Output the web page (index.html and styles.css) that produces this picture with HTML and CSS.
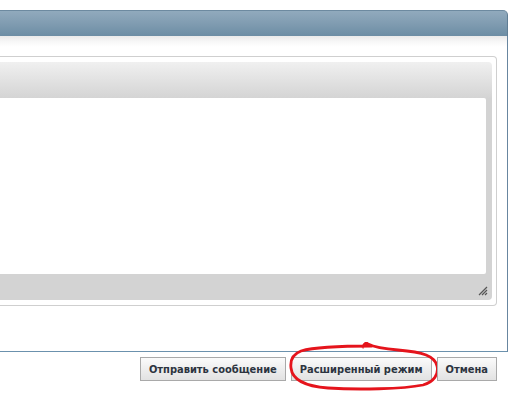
FILE: index.html
```html
<!DOCTYPE html>
<html lang="ru">
<head>
<meta charset="utf-8">
<title>Dialog</title>
<link rel="stylesheet" href="styles.css">
</head>
<body>
<div class="dialog">
  <div class="titlebar"></div>
  <div class="content">
    <div class="editor">
      <div class="toolbar"></div>
      <div class="area">
        <div class="textarea"></div>
        <svg class="grip" width="12" height="12" viewBox="0 0 12 12">
          <path d="M11 3 L3 11 M11 6 L6 11 M11 9 L9 11" stroke="#555" stroke-width="1.2" fill="none"/>
        </svg>
      </div>
    </div>
  </div>
</div>
<div class="buttons">
  <button class="btn">Отправить сообщение</button>
  <button class="btn btn-adv">Расширенный режим
    <svg class="circle" width="154" height="50" viewBox="0 0 154 50">
      <path d="M84 4 C62 4 27 5 13 9 C5 12 2 18 3 26 C4 36 14 44 40 46 C70 48 115 47 135 43 C146 40 151 32 149 24 C147 14 135 10 110 8 C98 7 86 5 80 2 C78 0 76 2 75 5" stroke="#e5141c" stroke-width="2.8" fill="none" stroke-linecap="round" stroke-linejoin="round"/>
    </svg>
  </button>
  <button class="btn">Отмена</button>
</div>
</body>
</html>
```
FILE: styles.css
```css
html, body {
  margin: 0;
  padding: 0;
  background: #fff;
  width: 518px;
  height: 402px;
  overflow: hidden;
  font-family: "DejaVu Sans", Tahoma, sans-serif;
}

.dialog {
  margin-top: 10px;
  width: 508px;
}

.titlebar {
  height: 25px;
  border-top: 1px solid #6d8aa0;
  border-right: 1px solid #5f7d94;
  border-top-right-radius: 5px;
  background: linear-gradient(to bottom, #91aabd 0%, #809cb1 50%, #6c8da4 100%);
}

.content {
  height: 316px;
  border-right: 1px solid #6886a0;
  border-bottom: 1px solid #6b91ad;
  background: linear-gradient(to bottom, #e9e9e9 0px, #f8f8f8 6px, #fff 11px, #fff 100%);
  padding-top: 20px;
  padding-right: 10px;
  box-sizing: border-box;
}

.editor {
  height: 250px;
  border: 1px solid #cfcfcf;
  border-left: none;
  border-radius: 0 4px 4px 0;
  padding: 5px 4px 5px 0;
  box-sizing: border-box;
  display: flex;
  flex-direction: column;
  background: #fff;
}

.toolbar {
  height: 36px;
  border-top-right-radius: 4px;
  background: linear-gradient(to bottom, #f0f0f0 0%, #e2e2e2 50%, #d4d4d4 100%);
}

.area {
  position: relative;
  flex: 1;
  background: #d3d3d3;
  border-bottom-right-radius: 4px;
  padding: 0 6px 26px 0;
  display: flex;
}

.textarea {
  flex: 1;
  background: #fff;
  border-radius: 0 2px 2px 0;
}

.grip {
  position: absolute;
  right: 4px;
  bottom: 4px;
}

.buttons {
  display: flex;
  justify-content: flex-end;
  gap: 5px;
  width: 497px;
  margin-top: 5px;
}

.btn {
  position: relative;
  height: 24px;
  padding: 0 8px;
  border: 1px solid #a9a9a9;
  border-radius: 0;
  background: linear-gradient(to bottom, #fbfbfb 0%, #eeeeee 50%, #e2e2e2 100%);
  font-family: "DejaVu Sans Condensed", "DejaVu Sans", Tahoma, sans-serif;
  font-weight: bold;
  font-size: 11px;
  color: #2c3440;
  cursor: pointer;
}

.circle {
  position: absolute;
  left: -4px;
  top: -16px;
  pointer-events: none;
}
```
